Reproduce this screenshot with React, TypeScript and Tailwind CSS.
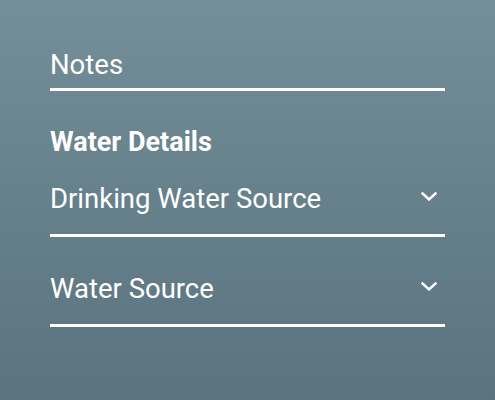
function Chevron() {
    return (
        <svg width="16" height="9" viewBox="0 0 16 9" fill="none" className="shrink-0">
            <polyline points="1.5,1.5 8,7.5 14.5,1.5" stroke="white" strokeWidth="2.4" strokeLinecap="square" />
        </svg>
    );
}

function SelectField({ label }: { label: string }) {
    return (
        <div>
            <div className="flex items-center justify-between pr-2">
                <span className="text-[27.5px] leading-8">{label}</span>
                <span className="-mt-[6px]">
                    <Chevron />
                </span>
            </div>
            <div className="mt-[19px] h-[3px] bg-white" />
        </div>
    );
}

export default function App() {
    return (
        <div
            className="h-[400px] w-[495px] bg-gradient-to-b from-[#748f99] to-[#5a737e] text-white"
            style={{ fontFamily: "Roboto, 'Liberation Sans', sans-serif" }}
        >
            <div className="w-[395px] ml-[50px] pt-[49px]">
                <div>
                    <div className="text-[27.5px] leading-8">Notes</div>
                    <div className="mt-[7px] h-[3px] bg-white" />
                </div>
                <h2 className="mt-[35px] text-[27px] leading-8 font-bold">Water Details</h2>
                <div className="mt-[25px]">
                    <SelectField label="Drinking Water Source" />
                </div>
                <div className="mt-[36px]">
                    <SelectField label="Water Source" />
                </div>
            </div>
        </div>
    );
}
